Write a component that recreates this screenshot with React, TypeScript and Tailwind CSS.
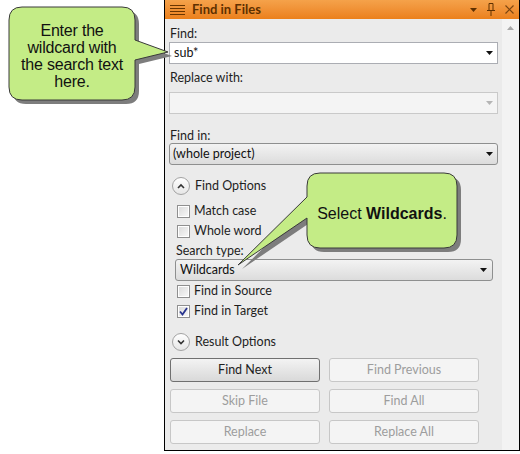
import React from 'react';

const ui = { fontFamily: 'Lato, "Open Sans", sans-serif' };
const callout = { fontFamily: '"Liberation Sans", Arial, sans-serif' };

const Arrow = ({ color = '#111' }: { color?: string }) => (
  <svg width="7" height="4" viewBox="0 0 7 4">
    <path d="M0 0 H7 L3.5 4 Z" fill={color} />
  </svg>
);

const Check = ({ checked = false, label }: { checked?: boolean; label: string }) => (
  <div className="flex items-center h-[13px] gap-[4px] pl-[8px]">
    <div className="w-[13px] h-[13px] border border-[#8f8f8f] bg-white p-[1px]">
      <div className="w-full h-full bg-gradient-to-br from-[#dcdcdc] to-[#f7f7f7] flex items-center justify-center">
        {checked && (
          <svg width="9" height="9" viewBox="0 0 9 9">
            <path d="M1 4.5 L3.5 7.5 L8 1" stroke="#28348f" strokeWidth="1.8" fill="none" />
          </svg>
        )}
      </div>
    </div>
    <span className="text-[12.5px] text-[#1e1e1e] leading-none">{label}</span>
  </div>
);

const Expander = ({ up, label }: { up: boolean; label: string }) => (
  <div className="flex items-center h-[18px] gap-[5px] pl-[3px]">
    <div className="w-[18px] h-[18px] rounded-full border border-[#a3a3a3] bg-gradient-to-b from-white to-[#e6e6e6] flex items-center justify-center">
      <svg width="8" height="6" viewBox="0 0 8 6">
        <path d={up ? 'M1 5 L4 2 L7 5' : 'M1 1.5 L4 4.5 L7 1.5'} stroke="#333" strokeWidth="1.6" fill="none" />
      </svg>
    </div>
    <span className="text-[12.5px] text-[#1e1e1e] leading-none">{label}</span>
  </div>
);

const Btn = ({ label, primary = false }: { label: string; primary?: boolean }) => (
  <button
    className={`w-[150px] h-[24px] rounded-[3px] text-[12.5px] flex items-center justify-center ${
      primary
        ? 'border border-[#707070] bg-gradient-to-b from-[#f3f3f3] to-[#d9d9d9] text-[#1e1e1e]'
        : 'border border-[#c7c7c7] bg-[#f4f4f4] text-[#9d9d9d]'
    }`}
  >
    {label}
  </button>
);

export default function App() {
  return (
    <div className="relative w-[520px] h-[454px] bg-white overflow-hidden" style={ui}>
      {/* dock panel */}
      <div className="ml-[164px] w-[356px] h-[451px] border-l border-r border-b border-black flex flex-col">
        <div className="h-[19px] bg-gradient-to-b from-[#f5a24a] to-[#eb801a] flex items-center pl-[5px] pr-[5px]">
          <div className="flex flex-col gap-[2px] w-[15px]">
            <div className="h-[1px] bg-[#6a3500]" />
            <div className="h-[1px] bg-[#6a3500]" />
            <div className="h-[1px] bg-[#6a3500]" />
            <div className="h-[1px] bg-[#6a3500]" />
          </div>
          <span className="ml-[7px] text-[13px] font-bold text-[#5e3000] leading-none">Find in Files</span>
          <div className="ml-auto flex items-center gap-[10px]">
            <svg width="7" height="4" viewBox="0 0 7 4">
              <path d="M0 0 H7 L3.5 4 Z" fill="#5e3000" />
            </svg>
            <svg width="8" height="13" viewBox="0 0 8 13">
              <path d="M2 0.5 H6 V7 M2 0.5 V7 M0 7.5 H8 M4 8 V13" stroke="#5e3000" strokeWidth="1" fill="none" />
            </svg>
            <svg width="9" height="9" viewBox="0 0 9 9">
              <path d="M0.5 0.5 L8.5 8.5 M8.5 0.5 L0.5 8.5" stroke="#7a4510" strokeWidth="1.2" fill="none" />
            </svg>
          </div>
        </div>

        <div className="flex-1 flex">
          <div className="flex-1 bg-[#ebebeb] px-[4px] flex flex-col">
            <div className="mt-[7px] h-[15px] text-[12.5px] leading-[15px] text-[#1e1e1e] pl-[1px]">Find:</div>
            <div className="mt-[1px] h-[22px] bg-white border border-[#abadb3] flex items-center pl-[4px] pr-[4px]">
              <span className="text-[12.5px] text-[#111]">sub*</span>
              <span className="ml-auto"><Arrow /></span>
            </div>

            <div className="mt-[6px] h-[15px] text-[12.5px] leading-[15px] text-[#1e1e1e] pl-[1px]">Replace with:</div>
            <div className="mt-[7px] h-[22px] bg-[#f4f4f4] border border-[#c9c9c9] flex items-center pr-[4px]">
              <span className="ml-auto"><Arrow color="#b5b5b5" /></span>
            </div>

            <div className="mt-[14px] h-[15px] text-[12.5px] leading-[15px] text-[#1e1e1e] pl-[1px]">Find in:</div>
            <div className="h-[22px] rounded-[3px] bg-gradient-to-b from-[#f3f3f3] to-[#dcdcdc] border border-[#8e8f8f] flex items-center pl-[3px] pr-[4px]">
              <span className="text-[12.5px] text-[#111]">(whole project)</span>
              <span className="ml-auto"><Arrow /></span>
            </div>

            <div className="mt-[12px]"><Expander up label="Find Options" /></div>
            <div className="mt-[10px]"><Check label="Match case" /></div>
            <div className="mt-[7px]"><Check label="Whole word" /></div>
            <div className="mt-[6px] h-[14px] text-[12.5px] leading-[14px] text-[#1e1e1e] pl-[7px]">Search type:</div>
            <div className="mt-[1px] ml-[6px] mr-[5px] h-[22px] rounded-[3px] bg-gradient-to-b from-[#f3f3f3] to-[#dcdcdc] border border-[#8e8f8f] flex items-center pl-[4px] pr-[5px]">
              <span className="text-[12.5px] text-[#111]">Wildcards</span>
              <span className="ml-auto"><Arrow /></span>
            </div>
            <div className="mt-[4px]"><Check label="Find in Source" /></div>
            <div className="mt-[7px]"><Check checked label="Find in Target" /></div>

            <div className="mt-[15px]"><Expander up={false} label="Result Options" /></div>

            <div className="mt-[7px] pl-[1px] flex flex-col gap-[7px]">
              <div className="flex gap-[9px]">
                <Btn primary label="Find Next" />
                <Btn label="Find Previous" />
              </div>
              <div className="flex gap-[9px]">
                <Btn label="Skip File" />
                <Btn label="Find All" />
              </div>
              <div className="flex gap-[9px]">
                <Btn label="Replace" />
                <Btn label="Replace All" />
              </div>
            </div>
          </div>
          <div className="w-[17px] bg-[#f3f3f3] flex justify-center pt-[7px]">
            <svg width="7" height="4" viewBox="0 0 7 4">
              <path d="M0 4 H7 L3.5 0 Z" fill="#a8a8a8" />
            </svg>
          </div>
        </div>
      </div>

      {/* callouts */}
      <svg className="absolute left-0 top-0" width="520" height="454" viewBox="0 0 520 454">
        <g transform="translate(4 4)">
          <path
            d="M22 7 H122 Q135 7 135 20 V40 L168 52 L135 60 V87 Q135 100 122 100 H22 Q9 100 9 87 V20 Q9 7 22 7 Z"
            fill="#7d7d7d"
          />
        </g>
        <path
          d="M22 7 H122 Q135 7 135 20 V40 L168 52 L135 60 V87 Q135 100 122 100 H22 Q9 100 9 87 V20 Q9 7 22 7 Z"
          fill="#c4ec86"
          stroke="#3a3a3a"
          strokeWidth="1"
        />
        <g transform="translate(4 4)">
          <path
            d="M320 173 H444 Q457 173 457 186 V235 Q457 248 444 248 H320 Q307 248 307 235 V218 L238 265 L307 197 V186 Q307 173 320 173 Z"
            fill="#7d7d7d"
          />
        </g>
        <path
          d="M320 173 H444 Q457 173 457 186 V235 Q457 248 444 248 H320 Q307 248 307 235 V218 L238 265 L307 197 V186 Q307 173 320 173 Z"
          fill="#c4ec86"
          stroke="#3a3a3a"
          strokeWidth="1"
        />
      </svg>
      <div
        className="absolute left-[9px] top-[22px] w-[126px] text-center text-[16px] leading-[17px] tracking-[-0.2px] text-[#111]"
        style={callout}
      >
        Enter the
        <br />
        wildcard with
        <br />
        the search text
        <br />
        here.
      </div>
      <div
        className="absolute left-[307px] top-[204px] w-[150px] text-center text-[16px] leading-[20px] text-[#111]"
        style={callout}
      >
        Select <b>Wildcards</b>.
      </div>
    </div>
  );
}
